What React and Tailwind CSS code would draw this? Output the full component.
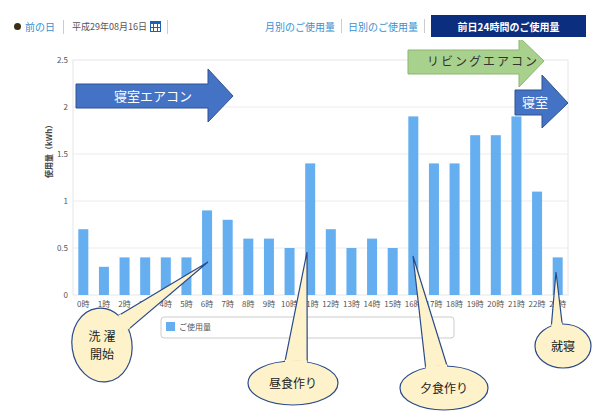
import React from "react";

const vals = [0.7,0.3,0.4,0.4,0.4,0.4,0.9,0.8,0.6,0.6,0.5,1.4,0.7,0.5,0.6,0.5,1.9,1.4,1.4,1.7,1.7,1.9,1.1,0.4];
const X0 = 73, X1 = 568, Y0 = 295, PU = 94;
const slot = (X1 - X0) / 24;
const serif = '"Liberation Serif", "Noto Sans CJK JP", serif';

function Callout({ cx, cy, rx, ry, tx, ty, a1, a2, lines, rot = 0 }) {
  const p = (a) => [cx + rx * Math.cos(a), cy + ry * Math.sin(a)];
  const [x1, y1] = p(a1), [x2, y2] = p(a2);
  return (
    <g>
      <path d={`M${x1},${y1} L${tx},${ty} L${x2},${y2} Z`} fill="#fdf2c9" stroke="#2a4a8a" strokeWidth="1.2" />
      <ellipse cx={cx} cy={cy} rx={rx} ry={ry} fill="#fdf2c9" stroke="#2a4a8a" strokeWidth="1.2" transform={`rotate(${rot} ${cx} ${cy})`} />
      <path d={`M${x1},${y1} L${x2},${y2}`} stroke="#fdf2c9" strokeWidth="3" />
      {lines.map((l, i) => (
        <text key={i} x={cx} y={cy + 5 - (lines.length - 1) * 9 + i * 18} textAnchor="middle" fontSize="12" fill="#222" style={{ fontFamily: serif }}>{l}</text>
      ))}
    </g>
  );
}

function Arrow({ x, y1, y2, bx, hy1, hy2, tip, ty, fill, stroke }) {
  return (
    <path d={`M${x},${y1} L${bx},${y1} L${bx},${hy1} L${tip},${ty} L${bx},${hy2} L${bx},${y2} L${x},${y2} Z`} fill={fill} stroke={stroke} strokeWidth="1" />
  );
}

export default function App() {
  return (
    <div className="w-[600px] h-[420px] bg-white relative overflow-hidden" style={{ fontFamily: '"Noto Sans CJK JP", "Liberation Sans", sans-serif' }}>
      <div className="h-[40px] flex items-end pb-[3px] px-[14px] justify-between">
        <div className="flex items-center text-[10px] mb-[3px]">
          <span className="w-[7px] h-[7px] rounded-full bg-[#3a2e14] mr-[4px]"></span>
          <span className="text-[#3a8fd0]">前の日</span>
          <span className="w-px h-[14px] bg-[#ccc] mx-[8px]"></span>
          <span className="text-[#555] text-[9px]">平成29年08月16日</span>
          <span className="ml-[3px] w-[11px] h-[11px] bg-[#1e5fb8] grid grid-cols-3 gap-[1px] p-[1px] pt-[3px]">
            {Array.from({ length: 6 }).map((_, i) => <span key={i} className="bg-white"></span>)}
          </span>
          <span className="w-px h-[14px] bg-[#ccc] ml-[6px]"></span>
        </div>
        <div className="flex items-center text-[10px]">
          <span className="text-[#3a8fd0]">月別のご使用量</span>
          <span className="w-px h-[14px] bg-[#ccc] mx-[6px]"></span>
          <span className="text-[#3a8fd0]">日別のご使用量</span>
          <span className="w-px h-[14px] bg-[#ccc] ml-[6px] mr-[6px]"></span>
          <span className="bg-[#0b2f7e] text-white font-bold h-[22px] w-[155px] flex items-center justify-center">前日24時間のご使用量</span>
        </div>
      </div>
      <svg width="600" height="380" className="block">
        <g transform="translate(0,-40)">
          <rect x={X0} y={Y0 - 2.5 * PU} width={X1 - X0} height={2.5 * PU} fill="none" stroke="#e6e6e6" />
          {[0.5, 1, 1.5, 2].map((v) => (
            <line key={v} x1={X0} x2={X1} y1={Y0 - v * PU} y2={Y0 - v * PU} stroke="#ececec" />
          ))}
          {["0", "0.5", "1", "1.5", "2", "2.5"].map((t, i) => (
            <text key={t} x={68} y={Y0 - i * 0.5 * PU + 3} textAnchor="end" fontSize="8" fill="#555">{t}</text>
          ))}
          <text transform="translate(52,178) rotate(-90)" fontSize="8" fontWeight="bold" fill="#444">使用量（kWh）</text>
          {vals.map((v, i) => {
            const cx = X0 + slot * (i + 0.5);
            return (
              <g key={i}>
                <rect x={cx - 5} y={Y0 - v * PU} width={10} height={v * PU} fill="#65aff0" />
                <text x={cx} y={307} textAnchor="middle" fontSize="8" fill="#555">{i}時</text>
              </g>
            );
          })}
          <rect x={161} y={317} width={293} height={21} rx={3} fill="#fff" stroke="#ccc" />
          <rect x={166} y={322} width={9} height={9} fill="#65aff0" />
          <text x={179} y={330} fontSize="8" fill="#555">ご使用量</text>

          <Arrow x={76} y1={84} y2={108} bx={208} hy1={69} hy2={122} tip={233} ty={96} fill="#4472c4" stroke="#2f528f" />
          <text x={114} y={101} fontSize="13" fill="#fff" style={{ fontFamily: serif }}>寝室エアコン</text>
          <Arrow x={408} y1={50} y2={74} bx={519} hy1={37} hy2={87} tip={544} ty={61} fill="#a9d18e" stroke="#8cb56f" />
          <text x={427} y={66} fontSize="12" fill="#333" letterSpacing="2" style={{ fontFamily: serif }}>リビングエアコン</text>
          <Arrow x={515} y1={90} y2={115} bx={542} hy1={75} hy2={128} tip={568} ty={103} fill="#4472c4" stroke="#2f528f" />
          <text x={522} y={107} fontSize="13" fill="#fff" style={{ fontFamily: serif }}>寝室</text>

          <Callout cx={102} cy={345} rx={30} ry={37} tx={208} ty={262} a1={-0.95} a2={-0.45} lines={["洗 濯", "開始"]} rot={-8} />
          <Callout cx={293} cy={383} rx={45} ry={22} tx={307} ty={252} a1={-1.75} a2={-1.25} lines={["昼食作り"]} />
          <Callout cx={444} cy={388} rx={44} ry={22} tx={413} ty={256} a1={-2.0} a2={-1.5} lines={["夕食作り"]} />
          <Callout cx={563} cy={346} rx={28} ry={22} tx={556} ty={272} a1={-2.0} a2={-1.6} lines={["就寝"]} />
        </g>
      </svg>
    </div>
  );
}
